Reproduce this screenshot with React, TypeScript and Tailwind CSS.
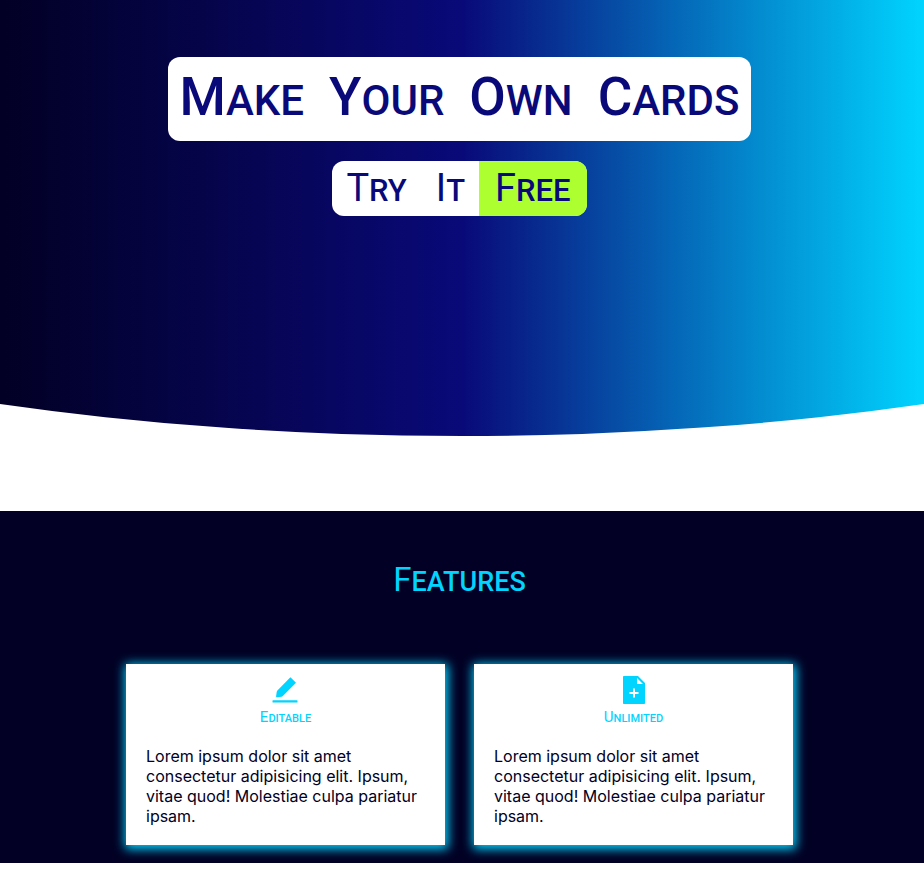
import React from "react";

function PencilIcon() {
  return (
    <svg viewBox="0 0 28 28" className="size-7 fill-[#00d4ff]" aria-hidden="true">
      <path d="M18.4 1.3 24 6.8 10.8 20c-.4.4-.8.6-1.3.7L5 21.3c-.6.1-1-.4-.9-1l.6-4.3c.1-.5.3-1 .7-1.4L18.4 1.3z" />
      <path d="M1 24.200h24c.3 0 .5.3.5.6V26c0 .3-.2.6-.5.6H1c-.3 0-.5-.3-.5-.6v-1.200c0-.3.2-.6.5-.6z" />
    </svg>
  );
}

function FilePlusIcon() {
  return (
    <svg viewBox="0 0 28 28" className="size-7 fill-[#00d4ff]" aria-hidden="true">
      <path
        fillRule="evenodd"
        d="M4.3 0H18l7 7v20.2c0 .5-.3.8-.8.8H3.800c-.5 0-.8-.3-.8-.8V.8C3 .3 3.300 0 3.800 0h.5zM17 2v6h6l-6-6zM13 12.500V16H9.500v2H13v3.500h2V18h3.500v-2H15v-3.500h-2z"
      />
    </svg>
  );
}

const features = [
  { title: "Editable", Icon: PencilIcon },
  { title: "Unlimited", Icon: FilePlusIcon },
];

export default function App() {
  return (
    <div className="bg-white font-[Roboto,sans-serif] text-[#090979]">
      <header className="min-h-[436px] bg-[linear-gradient(90deg,#020024_0%,#090979_50%,#00d4ff_100%)] [clip-path:ellipse(133%_100%_at_50%_0)]">
        <div className="flex flex-col items-center gap-5 pt-[57px] pr-[5px]">
          <h1 className="flex flex-wrap justify-center gap-x-[25px] rounded-xl bg-white px-3 py-2.5 text-[42px] leading-[60px] font-medium uppercase">
            {["Make", "Your", "Own", "Cards"].map((word) => (
              <span
                key={word}
                className="inline-block first-letter:text-[53px] first-letter:leading-[60px]"
              >
                {word}
              </span>
            ))}
          </h1>
          <button
            type="button"
            className="flex overflow-hidden rounded-xl bg-white text-[31px] leading-[51px] font-medium uppercase"
          >
            <span className="flex gap-[29px] px-[14px] pt-0.5">
              <span className="inline-block first-letter:text-[38px] first-letter:leading-[51px] first-letter:font-normal">
                Try
              </span>
              <span className="inline-block first-letter:text-[38px] first-letter:leading-[51px] first-letter:font-normal">
                It
              </span>
            </span>
            <span className="block bg-[#adff2f] px-4 pt-0.5 first-letter:text-[38px] first-letter:leading-[51px] first-letter:font-normal">
              Free
            </span>
          </button>
        </div>
      </header>

      <section className="mt-[75px] bg-[#020024] px-6 pt-[49px] pb-[18px]">
        <div className="mx-auto max-w-[672px] pr-[5px]">
          <h2 className="text-center text-[#00d4ff]">
            <span className="inline-block text-[27px] leading-[40px] font-medium uppercase first-letter:text-[33px] first-letter:leading-[40px] first-letter:font-normal">
              Features
            </span>
          </h2>
          <div className="mt-[62px] grid gap-[29px] sm:grid-cols-2">
            {features.map(({ title, Icon }) => (
              <article
                key={title}
                className="bg-white px-5 pt-3 pb-[19px] shadow-[1px_2px_10px_2px_#00d4ff]"
              >
                <div className="flex flex-col items-center text-[#00d4ff]">
                  <Icon />
                  <h3 className="block text-[11px] leading-[26px] font-medium uppercase first-letter:text-[15px] first-letter:leading-[26px] first-letter:font-normal">
                    {title}
                  </h3>
                </div>
                <p className="mt-[14px] font-[Inter,sans-serif] text-[16px] leading-5 text-[#020024]">
                  Lorem ipsum dolor sit amet consectetur adipisicing elit. Ipsum, vitae quod! Molestiae
                  culpa pariatur ipsam.
                </p>
              </article>
            ))}
          </div>
        </div>
      </section>
    </div>
  );
}
